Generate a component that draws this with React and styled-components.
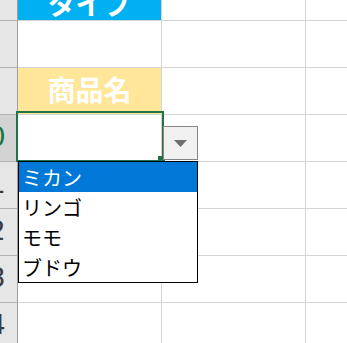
import styled, { createGlobalStyle } from 'styled-components';

const GlobalStyle = createGlobalStyle`
    html, body {
        margin: 0;
        padding: 0;
        background: #ffffff;
        overflow: hidden;
    }
`;

const Sheet = styled.div`
    position: relative;
    width: 347px;
    height: 343px;
    overflow: hidden;
    font-family: "Noto Sans CJK JP", "Noto Sans", sans-serif;
`;

const Row = styled.div`
    display: flex;
    height: ${({ $h }) => $h}px;
`;

const RowHeader = styled.div`
    flex: 0 0 18px;
    display: flex;
    justify-content: flex-end;
    align-items: center;
    padding-bottom: 3px;
    box-sizing: border-box;
    overflow: hidden;
    white-space: nowrap;
    background: ${({ $active }) => ($active ? '#d3d3d3' : '#e6e6e6')};
    color: ${({ $active }) => ($active ? '#217346' : '#3c3c3c')};
    border-right: 1px solid #9e9e9e;
    border-bottom: 1px solid #b3b3b3;
    font-family: "DejaVu Sans", sans-serif;
    font-size: 27px;
    line-height: 1;
`;

const RowNumber = styled.span`
    flex: 0 0 57px;
    text-align: center;
`;

const Cell = styled.div`
    flex: ${({ $grow }) => ($grow ? '1 1 auto' : '0 0 143px')};
    display: flex;
    justify-content: center;
    align-items: ${({ $top }) => ($top ? 'flex-end' : 'center')};
    overflow: hidden;
    background: ${({ $fill }) => $fill || '#ffffff'};
    border-right: ${({ $grow }) => ($grow ? 'none' : '1px solid #d4d4d4')};
    border-bottom: 1px solid #d4d4d4;
`;

const Title = styled.span`
    color: #ffffff;
    font-weight: 700;
    font-size: 28px;
    line-height: 28px;
    white-space: nowrap;
    padding-bottom: ${({ $top }) => ($top ? '3px' : '4px')};
`;

const Selection = styled.div`
    position: absolute;
    left: 16px;
    top: 111px;
    width: 148px;
    height: 51px;
    box-sizing: border-box;
    border: 2px solid #217346;
`;

const FillHandle = styled.div`
    position: absolute;
    left: 158px;
    top: 156px;
    width: 7px;
    height: 7px;
    background: #217346;
`;

const DropButton = styled.div`
    position: absolute;
    left: 163px;
    top: 126px;
    width: 35px;
    height: 34px;
    box-sizing: border-box;
    border: 1px solid #868686;
    background: #f0f0f0;
    display: flex;
    align-items: center;
    justify-content: center;
`;

const List = styled.ul`
    position: absolute;
    left: 18px;
    top: 161px;
    width: 180px;
    margin: 0;
    padding: 0;
    list-style: none;
    box-sizing: border-box;
    border: 1px solid #000000;
    background: #ffffff;
`;

const Item = styled.li`
    height: 30px;
    display: flex;
    align-items: center;
    padding-left: 3px;
    font-size: 20px;
    color: ${({ $active }) => ($active ? '#ffffff' : '#000000')};
    background: ${({ $active }) => ($active ? '#0078d7' : 'transparent')};
`;

const rows = [
    { n: '7', h: 21, b: 'タイプ', fill: '#00b0f0', top: true },
    { n: '8', h: 47 },
    { n: '9', h: 47, b: '商品名', fill: '#ffe699' },
    { n: '10', h: 47, active: true },
    { n: '11', h: 47 },
    { n: '12', h: 47 },
    { n: '13', h: 47 },
    { n: '14', h: 47 },
];

const options = ['ミカン', 'リンゴ', 'モモ', 'ブドウ'];

export default function App() {
    return (
        <>
            <GlobalStyle />
            <Sheet>
                {rows.map((r) => (
                    <Row key={r.n} $h={r.h}>
                        <RowHeader $active={r.active}>
                            <RowNumber>{r.n}</RowNumber>
                        </RowHeader>
                        <Cell $fill={r.fill} $top={r.top}>
                            {r.b && <Title $top={r.top}>{r.b}</Title>}
                        </Cell>
                        <Cell />
                        <Cell $grow />
                    </Row>
                ))}

                <Selection />
                <FillHandle />
                <DropButton>
                    <svg width="13" height="7" viewBox="0 0 13 7">
                        <path d="M0 0 H13 L6.5 7 Z" fill="#6e6e6e" />
                    </svg>
                </DropButton>
                <List>
                    {options.map((o, i) => (
                        <Item key={o} $active={i === 0}>
                            {o}
                        </Item>
                    ))}
                </List>
            </Sheet>
        </>
    );
}
